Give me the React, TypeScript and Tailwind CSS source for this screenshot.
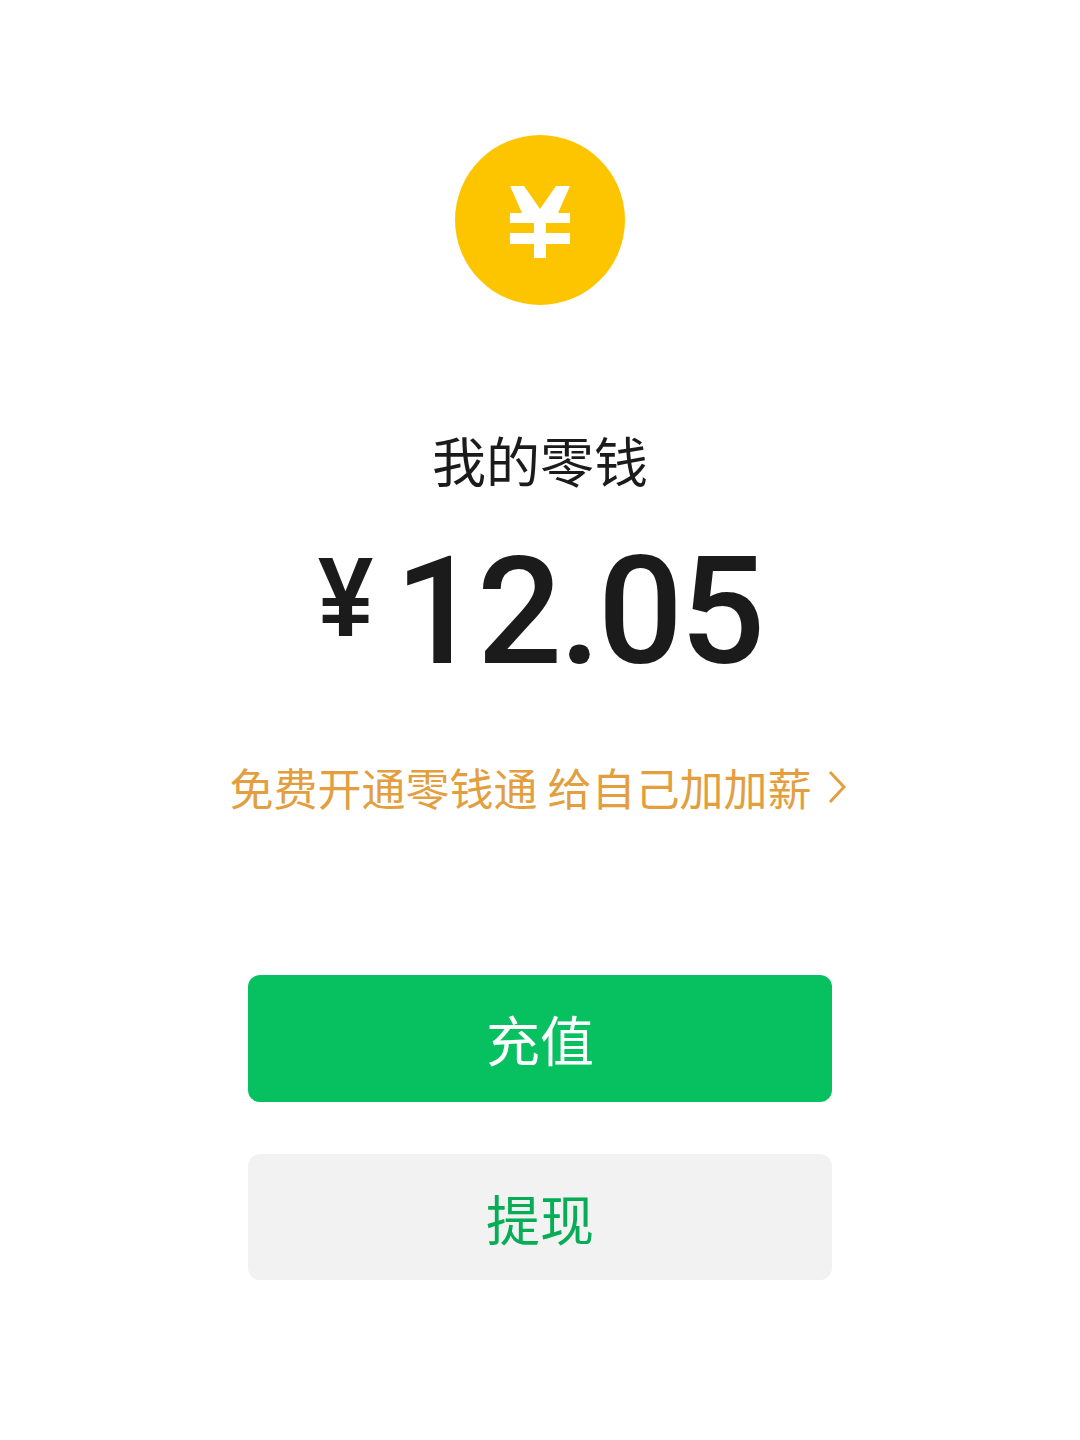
import React from "react";

const cjk = "font-['Noto_Sans_CJK_SC','Noto_Sans',sans-serif]";

const CoinIcon = () => (
  <div className="w-[170px] h-[170px] rounded-full bg-[#fdc500] flex items-center justify-center">
    <svg className="mt-[4px]" width="60" height="72" viewBox="0 0 60 72" fill="#ffffff">
      <path d="M0 0h14l16 23L46 0h14L48 27h12v10H36v10h24v11H36v14H24V58H0V47h24V37H0V27h12z" />
    </svg>
  </div>
);

const App = () => {
  return (
    <div className={`w-[1080px] h-[1440px] bg-white flex flex-col items-center pt-[135px] ${cjk}`}>
      <CoinIcon />
      <h1 className="mt-[122px] text-[54px] leading-[66px] font-normal text-[#1b1b1b]">我的零钱</h1>
      <div className="mt-[49px] h-[140px] flex items-start text-[#1b1b1b] font-['Roboto',sans-serif] font-medium">
        <span className="w-[77px] text-[114px] leading-[110px] font-bold origin-left scale-x-[0.87] font-['Liberation_Sans',sans-serif]">¥</span>
        <span className="text-[150px] leading-[140px] tracking-[-3px]">12.05</span>
      </div>
      <a className="mt-[75px] mr-[4px] flex items-center text-[44px] leading-[60px] text-[#e39f3f]">
        <span>免费开通零钱通 给自己加加薪</span>
        <svg className="ml-[17px]" width="18" height="34" viewBox="0 0 18 34" fill="none" stroke="#e39f3f" strokeWidth="3">
          <path d="M2 2l14 15L2 32" />
        </svg>
      </a>
      <div className="mt-[158px] w-[584px] flex flex-col gap-[52px]">
        <button className="h-[127px] rounded-[12px] bg-[#07c160] text-white text-[54px]">充值</button>
        <button className="h-[126px] rounded-[12px] bg-[#f2f2f2] text-[#06ad56] text-[54px]">提现</button>
      </div>
    </div>
  );
};

export default App;
